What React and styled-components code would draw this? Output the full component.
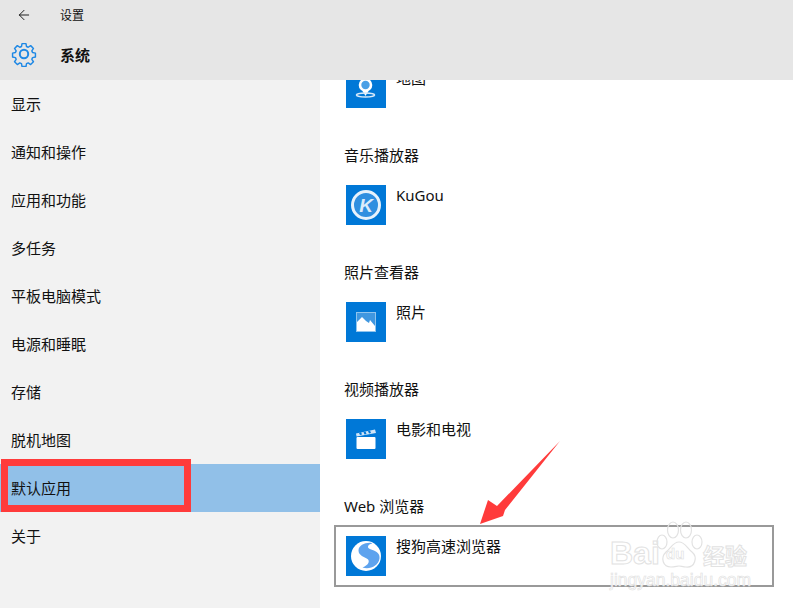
import React from "react";
import styled, { createGlobalStyle } from "styled-components";
import { ArrowLeft } from "lucide-react";

const GlobalStyle = createGlobalStyle`
  html, body { margin: 0; padding: 0; background: #fff; }
  body { font-family: "Noto Sans", "Noto Sans CJK SC", sans-serif; color: #111; }
`;

const menu = ["显示", "通知和操作", "应用和功能", "多任务", "平板电脑模式", "电源和睡眠", "存储", "脱机地图", "默认应用", "关于"];

const Page = styled.div`
  position: relative;
  width: 793px;
  height: 608px;
  overflow: hidden;
  display: flex;
  flex-direction: column;
`;
const Header = styled.header`
  height: 80px;
  flex: none;
  background: #e6e6e6;
  position: relative;
  z-index: 1;
`;
const BackRow = styled.div`
  height: 30px;
  display: flex;
  align-items: center;
  padding-left: 16px;
  gap: 28px;
  font-size: 12px;
`;
const TitleRow = styled.div`
  height: 50px;
  box-sizing: border-box;
  padding: 0 0 2px 11px;
  display: flex;
  align-items: center;
  gap: 23px;
  font-size: 15px;
  font-weight: 700;
`;
const Body = styled.div`
  flex: 1;
  display: grid;
  grid-template-columns: 320px 1fr;
  min-height: 0;
`;
const Sidebar = styled.nav`
  background: #f2f2f2;
`;
const MenuItem = styled.div`
  height: 48px;
  box-sizing: border-box;
  padding: 0 0 2px 11px;
  display: flex;
  align-items: center;
  font-size: 15px;
  background: ${(p) => (p.$active ? "#91c0e8" : "transparent")};
`;
const Content = styled.main`
  padding-left: 26px;
  margin-top: -12px;
`;
const Group = styled.section`
  margin-bottom: 37px;
`;
const Heading = styled.h3`
  margin: 0 0 20px -2px;
  font-size: 15px;
  font-weight: 400;
  line-height: 20px;
`;
const AppRow = styled.div`
  display: flex;
  gap: 10px;
  font-size: 15px;
  line-height: 20px;
`;
const SelectedBox = styled.div`
  margin: -11px 0 0 -12px;
  width: 440px;
  box-sizing: border-box;
  padding: 9px 10px;
  border: 2px solid #999;
`;
const AppIcon = styled.svg`
  width: 40px;
  height: 40px;
  flex: none;
  display: block;
  background: #0078d7;
`;
const Highlight = styled.div`
  position: absolute;
  left: 1px;
  top: 459px;
  width: 190px;
  height: 53px;
  box-sizing: border-box;
  border: 7px solid #ff3b3b;
`;
const Pointer = styled.svg`
  position: absolute;
  left: 470px;
  top: 435px;
  width: 100px;
  height: 100px;
`;
const Watermark = styled.div`
  position: absolute;
  left: 608px;
  top: 520px;
  width: 145px;
  height: 72px;
  color: rgba(255, 255, 255, 0.9);
  -webkit-text-stroke: 1px #e2e2e2;
`;
const MarkBai = styled.span`
  position: absolute;
  left: 2px;
  top: 15px;
  font: 700 32px/36px "Liberation Sans", sans-serif;
`;
const MarkJing = styled.span`
  position: absolute;
  left: 95px;
  top: 20px;
  font: 700 22px/28px "Noto Sans CJK SC", sans-serif;
`;
const MarkUrl = styled.span`
  position: absolute;
  left: 2px;
  top: 49px;
  font: 400 17.500px/22px "Liberation Sans", sans-serif;
  -webkit-text-stroke: 0.6px #dedede;
`;
const MarkPaw = styled.svg`
  position: absolute;
  left: 46px;
  top: 0;
  width: 50px;
  height: 52px;
`;
const MarkDu = styled.span`
  position: absolute;
  left: 58px;
  top: 24px;
  font: 700 15px/20px "Liberation Sans", sans-serif;
  -webkit-text-stroke: 0.6px #dedede;
`;

const Gear = () => (
  <svg width="26" height="26" viewBox="0 0 26 26" fill="none" stroke="#1e88e5" strokeWidth="1.6" strokeLinejoin="round">
    <path d="M10.8 1.5h4.4l.6 3.2 1.9.8 2.7-1.8 3.1 3.1-1.8 2.7.8 1.9 3.2.6v4.4l-3.2.6-.8 1.9 1.8 2.7-3.1 3.1-2.7-1.8-1.9.8-.6 3.2h-4.4l-.6-3.2-1.9-.8-2.7 1.8-3.1-3.1 1.8-2.7-.8-1.9-3.2-.6v-4.4l3.2-.6.8-1.9-1.8-2.7 3.1-3.1 2.7 1.8 1.9-.8z" transform="translate(1.3 1.3) scale(.9)" />
    <circle cx="13" cy="13" r="4.2" strokeWidth="2" />
  </svg>
);

const MapIcon = () => (
  <AppIcon viewBox="0 0 40 40">
    <circle cx="19.500" cy="17" r="5.500" fill="#4aa0e6" stroke="#fff" strokeWidth="2.600" />
    <path d="M19.500 28l-3-5h6z" fill="#fff" />
    <ellipse cx="19.500" cy="27" rx="9" ry="2" fill="none" stroke="#d6e9f9" strokeWidth="1.600" />
  </AppIcon>
);

const KugouIcon = () => (
  <AppIcon viewBox="0 0 40 40">
    <circle cx="20" cy="20" r="13.500" fill="#2f8fe0" stroke="#e6f2fc" strokeWidth="3" />
    <text x="20" y="26.500" textAnchor="middle" fontSize="19" fontWeight="700" fontStyle="italic" fontFamily="Liberation Sans, sans-serif" fill="#dcecfa">K</text>
  </AppIcon>
);

const PhotoIcon = () => (
  <AppIcon viewBox="0 0 40 40">
    <rect x="10.500" y="10.500" width="19" height="19" fill="#3f97e0" stroke="#8fc4ee" strokeWidth="1" />
    <path d="M11 29V20l5-5 4 4 3 2 1-3 5 6v5z" fill="#fff" />
  </AppIcon>
);

const MovieIcon = () => (
  <AppIcon viewBox="0 0 40 40">
    <rect x="10.500" y="18" width="19" height="12" rx="1" fill="#fff" />
    <path d="M10 14.500l19-4 1 3.500-19.500 3.500z" fill="#cfe4f7" />
    <path d="M13 14l2-1 1 2.600-2 .4zM17.500 13l2-.5 1 2.500-2 .4zM22 12l2-.4 1 2.400-2 .4z" fill="#0078d7" />
  </AppIcon>
);

const SogouIcon = () => (
  <AppIcon viewBox="0 0 40 40">
    <circle cx="20" cy="20" r="15" fill="#fff" />
    <path d="M26 7C20 6 12.500 9 12.500 14.500c0 5 6 6.500 9 8.500 2.500 1.700 1.500 6-5 8.500 7 2.500 16-1.500 17-9 .7-5-3-7-7-8.500-3-1.100-5-2-4.500-3.500.6-1.800 2-2.500 4-3z" fill="#5ea3ee" />
  </AppIcon>
);

export default function App() {
  return (
    <Page>
      <GlobalStyle />
      <Header>
        <BackRow>
          <ArrowLeft size={16} strokeWidth={1.4} color="#111" />
          <span>设置</span>
        </BackRow>
        <TitleRow>
          <Gear />
          <span>系统</span>
        </TitleRow>
      </Header>
      <Body>
        <Sidebar>
          {menu.map((item) => (
            <MenuItem key={item} $active={item === "默认应用"}>{item}</MenuItem>
          ))}
        </Sidebar>
        <Content>
          <Group>
            <AppRow><MapIcon /><span>地图</span></AppRow>
          </Group>
          <Group>
            <Heading>音乐播放器</Heading>
            <AppRow><KugouIcon /><span>KuGou</span></AppRow>
          </Group>
          <Group>
            <Heading>照片查看器</Heading>
            <AppRow><PhotoIcon /><span>照片</span></AppRow>
          </Group>
          <Group>
            <Heading>视频播放器</Heading>
            <AppRow><MovieIcon /><span>电影和电视</span></AppRow>
          </Group>
          <Group>
            <Heading>Web 浏览器</Heading>
            <SelectedBox>
              <AppRow><SogouIcon /><span>搜狗高速浏览器</span></AppRow>
            </SelectedBox>
          </Group>
        </Content>
      </Body>
      <Highlight />
      <Pointer viewBox="0 0 100 100">
        <path d="M10 89L18 65 27 71 90 6 35 75 33 81z" fill="#ff3b3b" />
      </Pointer>
      <Watermark>
        <MarkBai>Bai</MarkBai>
        <MarkPaw viewBox="0 0 50 52" fill="none" stroke="#e2e2e2" strokeWidth="1.200">
          <ellipse cx="8" cy="22" rx="5" ry="7" />
          <ellipse cx="19" cy="10" rx="5.500" ry="8" />
          <ellipse cx="32" cy="10" rx="5.500" ry="8" />
          <ellipse cx="43" cy="22" rx="5" ry="7" />
          <path d="M25 22c6 0 8 6 13 10 6 5 3 16-6 15-3 0-5-1-7-1s-4 1-8 1c-8 0-11-9-5-15 5-4 7-10 13-10z" />
        </MarkPaw>
        <MarkDu>du</MarkDu>
        <MarkJing>经验</MarkJing>
        <MarkUrl>jingyan.baidu.com</MarkUrl>
      </Watermark>
    </Page>
  );
}
